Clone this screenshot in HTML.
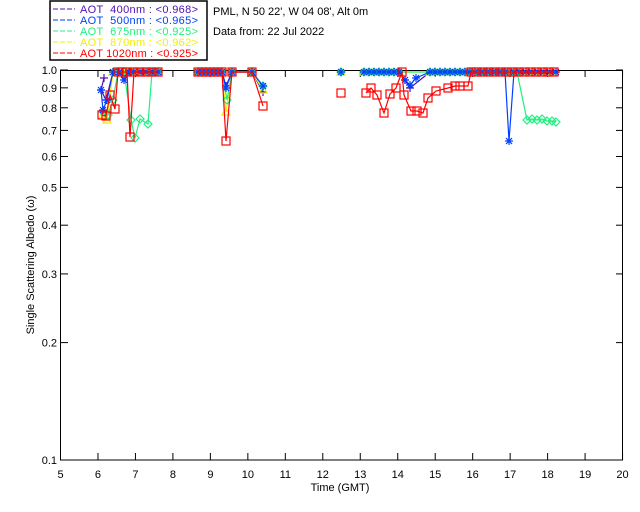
<!DOCTYPE html>
<html><head><meta charset="utf-8"><style>
html,body{margin:0;padding:0;background:#fff;width:640px;height:512px;overflow:hidden}
svg{display:block}
text{font-family:"Liberation Sans",sans-serif;font-size:11px;white-space:pre}
</style></head><body>
<svg id="s" width="640" height="512" xmlns="http://www.w3.org/2000/svg">
<rect x="50" y="1" width="157" height="59" fill="#fff" stroke="#000" stroke-width="1.5"/>
<g font-size="10.5">
<line x1="53" y1="9" x2="75" y2="9" stroke="#5010b0" stroke-dasharray="5,2"/><text x="80" y="13" fill="#5010b0" textLength="118" lengthAdjust="spacing">AOT  400nm : &lt;0.968&gt;</text>
<line x1="53" y1="20" x2="75" y2="20" stroke="#0040ff" stroke-dasharray="5,2"/><text x="80" y="24" fill="#0040ff" textLength="118" lengthAdjust="spacing">AOT  500nm : &lt;0.965&gt;</text>
<line x1="53" y1="31" x2="75" y2="31" stroke="#20f080" stroke-dasharray="5,2"/><text x="80" y="35" fill="#20f080" textLength="118" lengthAdjust="spacing">AOT  675nm : &lt;0.925&gt;</text>
<line x1="53" y1="42" x2="75" y2="42" stroke="#f0f000" stroke-dasharray="5,2"/><text x="80" y="46" fill="#f0f000" textLength="118" lengthAdjust="spacing">AOT  870nm : &lt;0.962&gt;</text>
<line x1="53" y1="53" x2="75" y2="53" stroke="#ff0000" stroke-dasharray="5,2"/><text x="80" y="57" fill="#ff0000" textLength="118" lengthAdjust="spacing">AOT 1020nm : &lt;0.925&gt;</text>
</g>
<text x="213" y="15" font-size="10">PML, N 50 22', W 04 08', Alt 0m</text>
<text x="213" y="35" font-size="10.5">Data from: 22 Jul 2022</text>
<rect x="60.5" y="70.5" width="562" height="389.5" fill="none" stroke="#000"/>
<g id="ax"></g>
<text x="340" y="491" text-anchor="middle" font-size="10">Time (GMT)</text>
<text transform="translate(34,265) rotate(-90)" text-anchor="middle" font-size="10">Single Scattering Albedo (ω)</text>
<g id="d" fill="none" stroke-width="1.2"></g>
</svg>
<script>
(function(){
var ns="http://www.w3.org/2000/svg",ax=document.getElementById("ax"),d=document.getElementById("d");
function el(p,t,a,txt){var e=document.createElementNS(ns,t);for(var k in a)e.setAttribute(k,a[k]);if(txt)e.textContent=txt;p.appendChild(e);return e;}
function Y(v){return 460-(Math.log(v)/Math.LN10+1)*390;}
for(var t=5;t<=20;t++){var x=60.5+(t-5)*37.47;el(ax,"line",{x1:x,y1:460,x2:x,y2:453,stroke:"#000"});el(ax,"line",{x1:x,y1:70,x2:x,y2:77,stroke:"#000"});el(ax,"text",{x:x,y:478,"text-anchor":"middle","font-size":"10"},""+t);}
[0.1,0.2,0.3,0.4,0.5,0.6,0.7,0.8,0.9,1.0].forEach(function(v){var y=Y(v);el(ax,"line",{x1:60,y1:y,x2:68,y2:y,stroke:"#000"});el(ax,"line",{x1:623,y1:y,x2:616,y2:y,stroke:"#000"});el(ax,"text",{x:57,y:y+4,"text-anchor":"end","font-size":"10"},v.toFixed(1));});
function tp(a,b,s){var r=[];for(var x=a;x<=b;x+=s)r.push([x,72]);return r;}
function series(pts,col,mk){var seg=[];
function draw(){if(seg.length>1)el(d,"polyline",{points:seg.map(function(p){return p.join(",")}).join(" "),stroke:col});}
pts.forEach(function(p){if(p==null){draw();seg=[];}else seg.push(p);});draw();
pts.forEach(function(p){if(!p)return;var x=p[0],y=p[1];
if(mk=="sq")el(d,"rect",{x:x-4,y:y-4,width:8,height:8,stroke:col});
else if(mk=="di")el(d,"path",{d:"M"+x+" "+(y-4)+"L"+(x+4)+" "+y+"L"+x+" "+(y+4)+"L"+(x-4)+" "+y+"Z",stroke:col});
else if(mk=="pl")el(d,"path",{d:"M"+(x-4)+" "+y+"H"+(x+4)+"M"+x+" "+(y-4)+"V"+(y+4),stroke:col});
else if(mk=="as")el(d,"path",{d:"M"+(x-4)+" "+y+"H"+(x+4)+"M"+x+" "+(y-4)+"V"+(y+4)+"M"+(x-3)+" "+(y-3)+"L"+(x+3)+" "+(y+3)+"M"+(x-3)+" "+(y+3)+"L"+(x+3)+" "+(y-3),stroke:col});
else if(mk=="tr")el(d,"path",{d:"M"+x+" "+(y-4)+"L"+(x+4)+" "+(y+3)+"L"+(x-4)+" "+(y+3)+"Z",stroke:col});});}
var A=[[104,78],[101,90],[106,100]].concat(tp(113,158,5)).concat([null]).concat(tp(198,222,4)).concat([[226,86],[232,72],[252,72],[263,92],null,[341,72],null]).concat(tp(364,400,5)).concat([[405,80],[410,88]]).concat(tp(430,470,5)).concat(tp(475,558,6));
series(A,"#5010b0","pl");
var Y4=[[103,115],[107,120],[113,72]].concat(tp(118,158,5)).concat([null]).concat(tp(198,222,4)).concat([[226,112],[232,72],[252,72],[263,90],null,[341,72],null]).concat(tp(364,400,5)).concat(tp(430,470,5)).concat(tp(475,558,6));
series(Y4,"#f0f000","tr");
var G=[[103,112],[108,115],[113,100],[118,72],[124,72],[131,120],[135,138],[140,119],[148,124],[152,72],[158,72],null].concat(tp(198,222,4)).concat([[227,100],[232,72],[252,72],[263,86],null,[341,72],null]).concat(tp(364,400,5)).concat(tp(430,470,5)).concat(tp(475,518,6)).concat([[527,120],[532,119],[537,120],[542,119],[547,121],[552,121],[556,122]]);
series(G,"#20f080","di");
var B=[[101,90],[103,110],[107,100],[113,72],[119,72],[124,80],[129,72]].concat(tp(134,158,6)).concat([null]).concat(tp(198,222,4)).concat([[226,88],[232,72],[252,72],[263,86],null,[341,72],null]).concat(tp(364,400,5)).concat([[405,80],[410,85],[416,78]]).concat(tp(430,470,5)).concat(tp(475,505,6)).concat([[509,141],[514,72]]).concat(tp(520,558,6));
series(B,"#0040ff","as");
var R=[[102,115],[106,116],[110,95],[115,109],[118,72],[122,72],[127,72],[130,137],[134,72]].concat(tp(140,158,6)).concat([null]).concat(tp(198,222,4)).concat([[226,141],[232,72],[252,72],[263,106],null,[341,93],null,[366,93],[371,88],[377,95],[384,113],[390,94],[396,88],[402,72],[404,95],[411,111],[417,111],[423,113],[428,98],[436,91],[448,88],[455,86],[460,86],[468,86],[471,72]]).concat(tp(476,558,6));
series(R,"#ff0000","sq");
})();
</script>
</body></html>
